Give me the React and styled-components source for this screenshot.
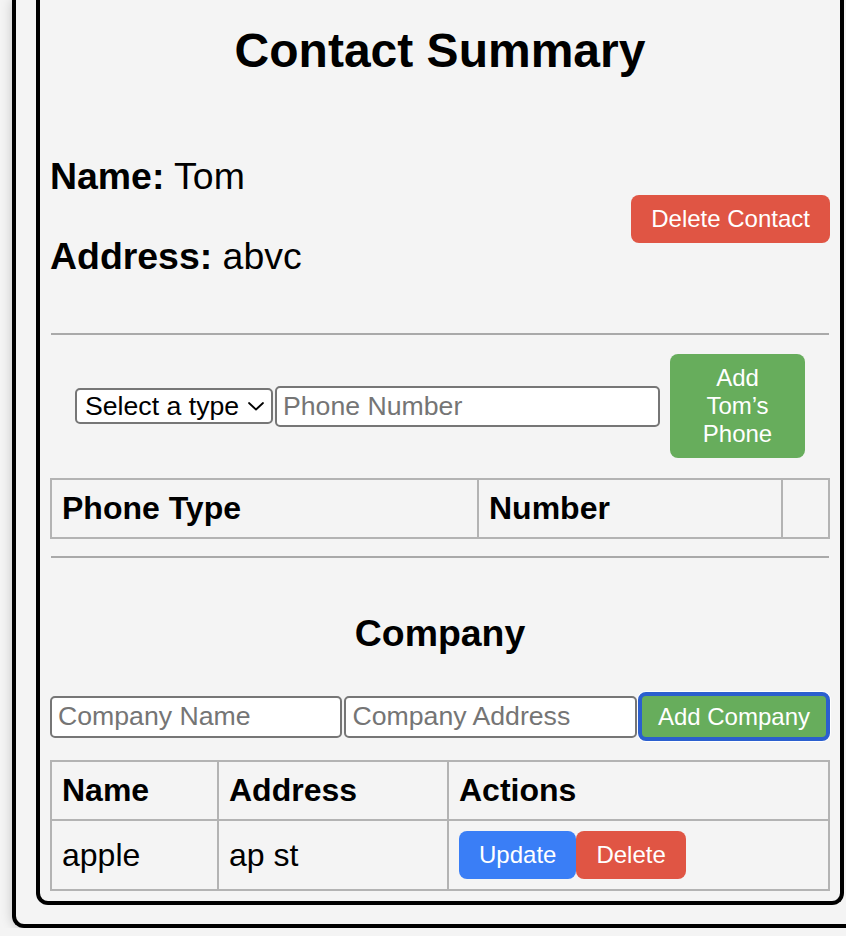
import styled, { createGlobalStyle } from "styled-components";

const GlobalStyle = createGlobalStyle`
  html, body {
    margin: 0;
    padding: 0;
    background: #f4f4f4;
    overflow: hidden;
  }
  body {
    font-family: "Liberation Sans", Arial, sans-serif;
    color: #000;
  }
`;

const Page = styled.div`
  padding-left: 12px;
  width: 834px;
`;

// the frame runs on past the top and right edge of the window, so those borders are dropped
const Outer = styled.div`
  padding: 0 2px 19px 20px;
  border: 4px solid #000;
  border-top: none;
  border-right: none;
  border-radius: 0 0 0 12px;
  box-shadow: 0 0 12px rgba(0, 0, 0, 0.2);
  background: #f4f4f4;
`;

const Card = styled.div`
  border: 4px solid #000;
  border-top: none;
  border-radius: 0 0 12px 12px;
  padding: 0 10px 10px 10px;
  background: #f4f4f4;
`;

const Title = styled.h2`
  margin: 0 0 40px 0;
  padding-top: 23px;
  font-size: 48px;
  line-height: 55px;
  font-weight: bold;
  text-align: center;
`;

const InfoRow = styled.div`
  display: flex;
  align-items: center;
  justify-content: space-between;
`;

const InfoList = styled.div`
  display: flex;
  flex-direction: column;
  gap: 37px;
  padding: 37px 0;
`;

const InfoLine = styled.p`
  margin: 0;
  font-size: 37.44px;
  line-height: 43px;
`;

const Label = styled.strong`
  font-weight: bold;
`;

const Button = styled.button`
  font-family: "Liberation Sans", Arial, sans-serif;
  font-size: 24px;
  line-height: 28px;
  color: #fff;
  background: ${(p) => p.$bg};
  border: none;
  border-radius: 8px;
  padding: 10px 20px;
  cursor: pointer;
  flex-shrink: 0;
`;

const DeleteContact = styled(Button)`
  margin-top: 4px;
`;

const Rule = styled.hr`
  border: none;
  border-top: 2px solid #a9a9a9;
  height: 0;
  margin: ${(p) => p.$margin};
`;

const PhoneForm = styled.form`
  display: flex;
  align-items: center;
  justify-content: center;
  margin: 0 0 20px 0;
`;

const SelectWrap = styled.div`
  position: relative;
  width: 198px;
  height: 36px;
`;

const Select = styled.select`
  appearance: none;
  width: 100%;
  height: 100%;
  font-family: "Liberation Sans", Arial, sans-serif;
  font-size: 26.67px;
  color: #000;
  background: #fff;
  border: 2px solid #767676;
  border-radius: 5px;
  padding: 0 8px;
  box-sizing: border-box;
`;

const Chevron = styled.svg`
  position: absolute;
  right: 8px;
  top: 11px;
  width: 18px;
  height: 14px;
  pointer-events: none;
`;

const TextInput = styled.input`
  font-family: "Liberation Sans", Arial, sans-serif;
  font-size: 26.67px;
  height: ${(p) => p.$h || "42px"};
  width: ${(p) => p.$w || "auto"};
  flex: ${(p) => (p.$grow ? "1 1 0" : "0 0 auto")};
  min-width: 0;
  box-sizing: border-box;
  border: 2px solid #767676;
  border-radius: 5px;
  background: #fff;
  padding: 0 6px;
  margin-left: 2px;
  &::placeholder {
    color: #757575;
  }
  &:first-child {
    margin-left: 0;
  }
`;

const PhoneButton = styled(Button)`
  width: 135px;
  margin-left: 10px;
  padding: 10px 20px;
`;

const Table = styled.table`
  width: 100%;
  border-collapse: collapse;
  border: 2px solid #b3b3b3;
`;

const Th = styled.th`
  border: 2px solid #b3b3b3;
  padding: 10px;
  font-size: 32px;
  line-height: 37px;
  font-weight: bold;
  text-align: left;
  width: ${(p) => p.$w || "auto"};
`;

const Td = styled.td`
  border: 2px solid #b3b3b3;
  padding: 10px;
  font-size: 32px;
  line-height: 37px;
  text-align: left;
  vertical-align: middle;
`;

const Actions = styled.div`
  display: flex;
`;

const SectionTitle = styled.h3`
  margin: 54px 0 37px 0;
  font-size: 37.44px;
  line-height: 43px;
  font-weight: bold;
  text-align: center;
`;

const CompanyForm = styled.form`
  display: flex;
  align-items: center;
  margin-bottom: 19px;
`;

const AddCompany = styled(Button)`
  margin-left: 1px;
  padding: 6.5px 16px;
  border: 4px solid #2b5fcf;
  box-shadow: 0 0 0 1px #fff;
`;

const App = () => {
  return (
    <>
      <GlobalStyle />
      <Page>
        <Outer>
          <Card>
            <Title>Contact Summary</Title>
            <InfoRow>
              <InfoList>
                <InfoLine>
                  <Label>Name:</Label> Tom
                </InfoLine>
                <InfoLine>
                  <Label>Address:</Label> abvc
                </InfoLine>
              </InfoList>
              <DeleteContact $bg="#e05544">Delete Contact</DeleteContact>
            </InfoRow>
            <Rule $margin="18px 1px 19px 1px" />
            <PhoneForm onSubmit={(e) => e.preventDefault()}>
              <SelectWrap>
                <Select defaultValue="">
                  <option value="">Select a type</option>
                  <option value="home">Home</option>
                  <option value="work">Work</option>
                  <option value="mobile">Mobile</option>
                </Select>
                <Chevron viewBox="0 0 18 14" fill="none">
                  <path d="M2 4 L9 10.5 L16 4" stroke="#000" strokeWidth="1.8" strokeLinecap="round" strokeLinejoin="round" />
                </Chevron>
              </SelectWrap>
              <TextInput placeholder="Phone Number" $w="385px" $h="41px" />
              <PhoneButton $bg="#67ad5c" type="submit">
                Add Tom’s Phone
              </PhoneButton>
            </PhoneForm>
            <Table>
              <thead>
                <tr>
                  <Th $w="405px">Phone Type</Th>
                  <Th $w="282px">Number</Th>
                  <Th></Th>
                </tr>
              </thead>
            </Table>
            <Rule $margin="17px 1px 0 1px" />
            <SectionTitle>Company</SectionTitle>
            <CompanyForm onSubmit={(e) => e.preventDefault()}>
              <TextInput placeholder="Company Name" $grow />
              <TextInput placeholder="Company Address" $grow />
              <AddCompany $bg="#67ad5c" type="submit">
                Add Company
              </AddCompany>
            </CompanyForm>
            <Table>
              <thead>
                <tr>
                  <Th $w="145px">Name</Th>
                  <Th $w="208px">Address</Th>
                  <Th>Actions</Th>
                </tr>
              </thead>
              <tbody>
                <tr>
                  <Td>apple</Td>
                  <Td>ap st</Td>
                  <Td>
                    <Actions>
                      <Button $bg="#3a7ef6">Update</Button>
                      <Button $bg="#e05544">Delete</Button>
                    </Actions>
                  </Td>
                </tr>
              </tbody>
            </Table>
          </Card>
        </Outer>
      </Page>
    </>
  );
};

export default App;
